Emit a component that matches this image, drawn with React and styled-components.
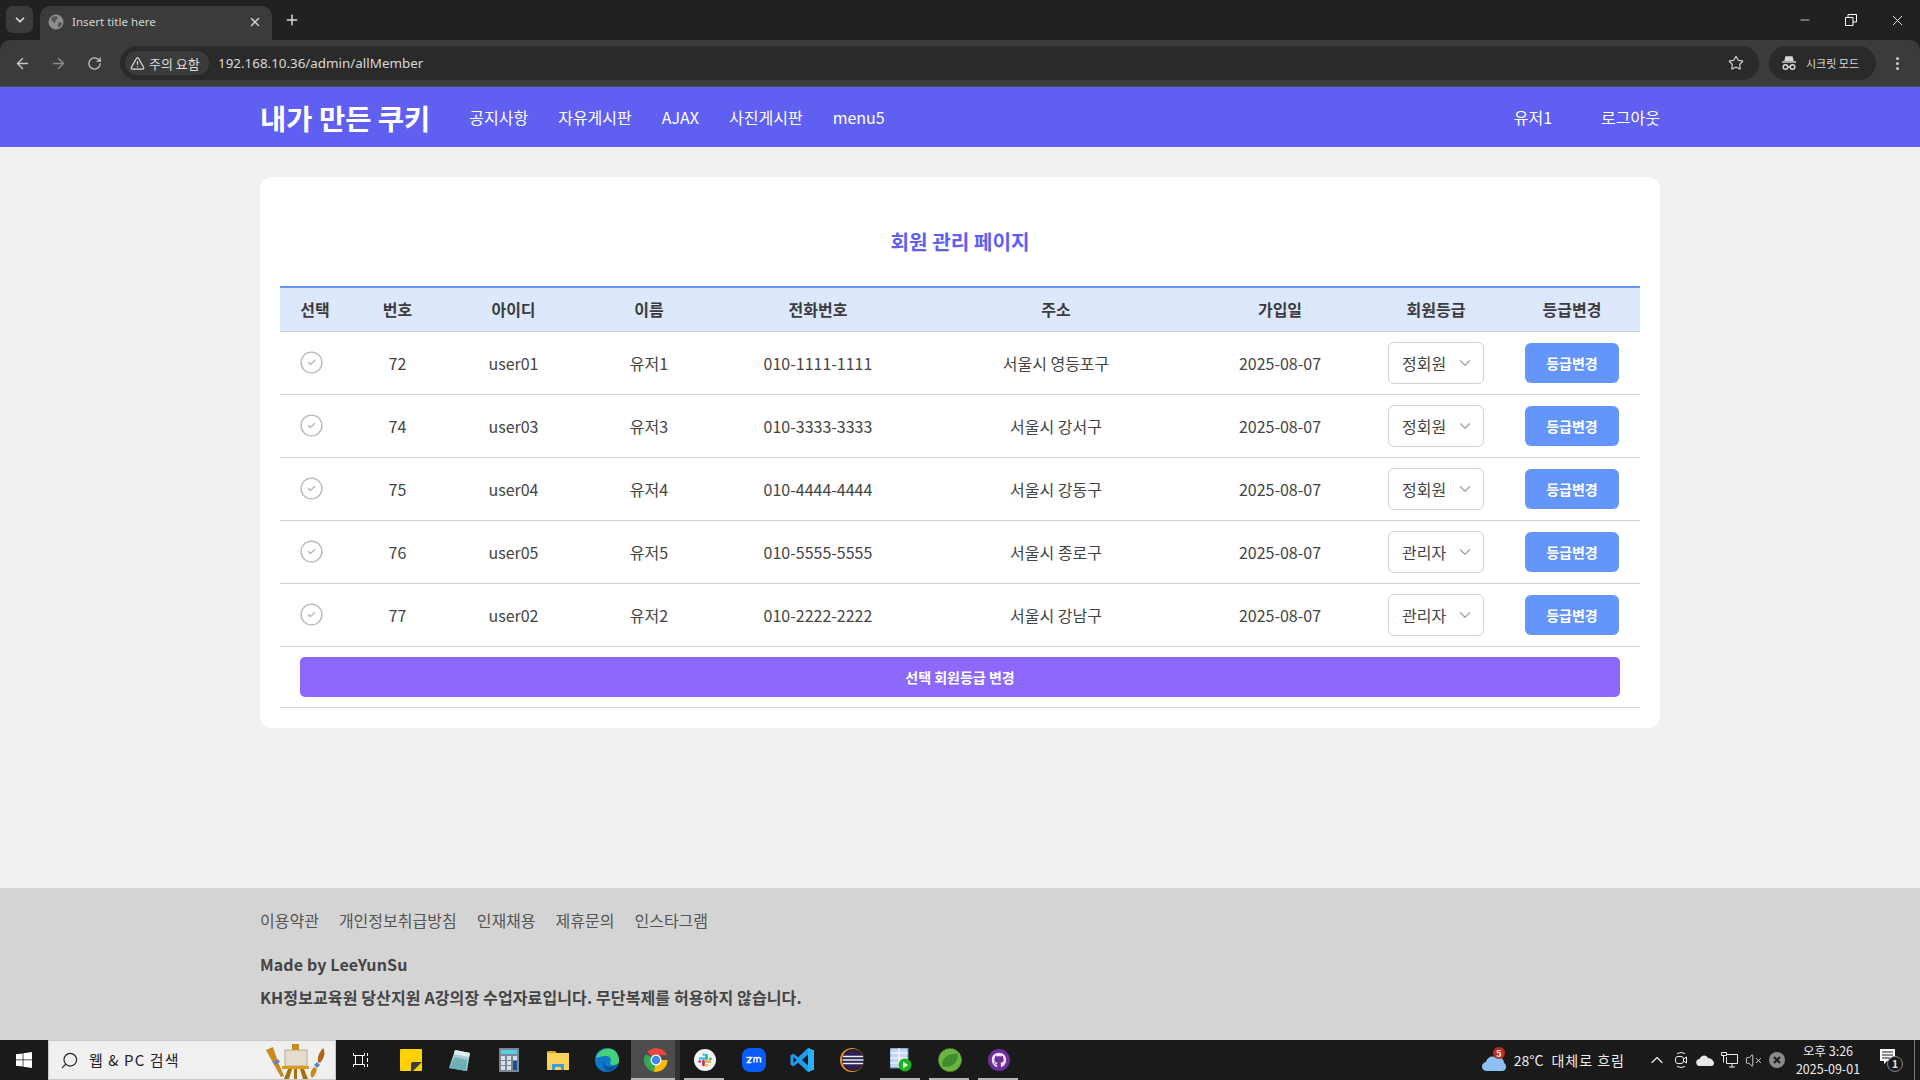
import React from "react";
import styled, { createGlobalStyle } from "styled-components";
import {
  ArrowLeft,
  ArrowRight,
  ChevronDown,
  ChevronUp,
  CircleCheck,
  EllipsisVertical,
  Minus,
  Plus,
  RotateCw,
  Search,
  Star,
  TriangleAlert,
  VolumeX,
  X,
} from "lucide-react";
import { FaGithub } from "react-icons/fa";

const members = [
  { no: 72, id: "user01", name: "유저1", phone: "010-1111-1111", addr: "서울시 영등포구", grade: "정회원" },
  { no: 74, id: "user03", name: "유저3", phone: "010-3333-3333", addr: "서울시 강서구", grade: "정회원" },
  { no: 75, id: "user04", name: "유저4", phone: "010-4444-4444", addr: "서울시 강동구", grade: "정회원" },
  { no: 76, id: "user05", name: "유저5", phone: "010-5555-5555", addr: "서울시 종로구", grade: "관리자" },
  { no: 77, id: "user02", name: "유저2", phone: "010-2222-2222", addr: "서울시 강남구", grade: "관리자" },
];

const columns = [
  ["선택", 70],
  ["번호", 95],
  ["아이디", 137],
  ["이름", 134],
  ["전화번호", 204],
  ["주소", 272],
  ["가입일", 176],
  ["회원등급", 136],
  ["등급변경", 136],
];

const GlobalStyle = createGlobalStyle`
  html, body {
    margin: 0;
    padding: 0;
    background: #f0f2f1;
  }
  body {
    font-family: "Noto Sans CJK KR", "Noto Sans", sans-serif;
    color: #444;
  }
  * {
    box-sizing: border-box;
  }
`;

const Page = styled.div`
  width: 1920px;
  height: 1080px;
  display: flex;
  flex-direction: column;
  overflow: hidden;
  background: #202221;
`;

/* browser window */
const TabStrip = styled.div`
  height: 40px;
  background: #202221;
  display: flex;
  align-items: flex-end;
  padding-left: 6px;
  color: #d8d8d8;
`;

const TabSearch = styled.div`
  width: 27px;
  height: 27px;
  margin: 0 7px 7px 0;
  background: #3b3b3b;
  border-radius: 7px;
  display: flex;
  align-items: center;
  justify-content: center;
  color: #ddd;
`;

const Tab = styled.div`
  width: 232px;
  height: 34px;
  padding: 0 10px 3px 8px;
  background: #3b3b3b;
  border-radius: 10px 10px 0 0;
  display: flex;
  align-items: center;
  font: 11.6px "Noto Sans", sans-serif;
  color: #d4d4d4;
`;

const TabTitle = styled.span`
  flex: 1;
  margin-left: 8px;
`;

const NewTab = styled.div`
  width: 20px;
  margin: 0 0 10px 10px;
  height: 20px;
  display: flex;
  align-items: center;
  justify-content: center;
  color: #ddd;
`;

const WindowControls = styled.div`
  margin-left: auto;
  display: flex;
  height: 40px;
  align-items: center;
  color: #fff;
`;

const WindowButton = styled.div`
  width: 46px;
  display: flex;
  justify-content: center;
`;

const Toolbar = styled.div`
  height: 47px;
  background: #3b3b3b;
  border-radius: 10px 10px 0 0;
  border-bottom: 1px solid #4a4a4a;
  display: flex;
  align-items: center;
  padding-left: 4px;
  color: #c7c7c7;
`;

const ToolButton = styled.div`
  width: 36px;
  display: flex;
  justify-content: center;
  color: ${(p) => (p.$dim ? "#8a8a8a" : "#c7c7c7")};
`;

const AddressBar = styled.div`
  width: 1639px;
  height: 34px;
  flex-shrink: 0;
  margin-left: 8px;
  background: #2a2a2a;
  border-radius: 17px;
  display: flex;
  align-items: center;
  padding: 0 15px 0 5px;
`;

const Chip = styled.div`
  width: 84px;
  height: 24px;
  background: #3b3b3b;
  border-radius: 12px;
  display: flex;
  align-items: center;
  gap: 4px;
  padding-left: 5px;
  font-size: 13px;
  color: #ddd;
`;

const Url = styled.span`
  margin-left: 9px;
  flex: 1;
  font: 13.4px "Noto Sans", sans-serif;
  color: #d8d8d8;
`;

const IncognitoPill = styled.div`
  width: 107px;
  height: 34px;
  flex-shrink: 0;
  margin-left: 10px;
  background: #2a2a2a;
  border-radius: 17px;
  display: flex;
  align-items: center;
  gap: 9px;
  padding-left: 12px;
  font-size: 11px;
  color: #d8d8d8;
`;

const MenuButton = styled.div`
  margin-left: 13px;
  display: flex;
`;

/* site header */
const Header = styled.header`
  height: 60px;
  background: #5f60f2;
  color: #fff;
`;

const Container = styled.div`
  width: 1400px;
  margin: 0 auto;
`;

const HeaderInner = styled(Container)`
  height: 100%;
  display: flex;
  align-items: center;
`;

const Logo = styled.a`
  font-size: 28.5px;
  font-weight: 700;
  margin-right: 39px;
`;

const NavLinks = styled.nav`
  display: flex;
  gap: 30px;
  font-size: 16px;
`;

const UserLinks = styled(NavLinks)`
  margin-left: auto;
  gap: 49px;
`;

const Main = styled.main`
  flex: 1;
  padding-top: 30px;
  background: #f0f2f1;
`;

const Card = styled(Container)`
  height: 551px;
  background: #fff;
  border-radius: 12px;
  padding: 0 20px;
`;

const Title = styled.h2`
  margin: 0;
  height: 109px;
  padding-top: 48px;
  line-height: 34px;
  text-align: center;
  font-size: 20.2px;
  font-weight: 700;
  color: #5f60f2;
`;

const Table = styled.table`
  width: 1360px;
  table-layout: fixed;
  border-collapse: collapse;
  font-size: 16px;
`;

const HeadRow = styled.tr`
  height: 44px;
  background: #dde8fd;
  border-top: 2px solid #6495fb;
  border-bottom: 1px solid #d2d2d2;
`;

const Th = styled.th`
  font-weight: 600;
  font-size: 16px;
  color: #3c3c3c;
  padding: 0;
`;

const Row = styled.tr`
  height: 63px;
  border-bottom: 1px solid #d2d2d2;
`;

const Td = styled.td`
  padding: 0;
  text-align: center;
  color: #444;
`;

const CheckCell = styled(Td)`
  padding-right: 7px;
  color: #b8b8b8;
  line-height: 0;
`;

const GradeSelect = styled.div`
  width: 96px;
  height: 42px;
  margin: 0 auto;
  border: 1px solid #d0d0d0;
  border-radius: 6px;
  display: flex;
  align-items: center;
  justify-content: space-between;
  padding: 0 9px 0 13px;
  color: #444;
  svg {
    color: #a8a8a8;
  }
`;

const GradeButton = styled.button`
  width: 94px;
  height: 40px;
  border: 0;
  border-radius: 6px;
  background: #6495fb;
  color: #fff;
  font: 700 14px "Noto Sans CJK KR", sans-serif;
`;

const ActionRow = styled.tr`
  height: 61px;
  border-bottom: 1px solid #d2d2d2;
`;

const ActionCell = styled.td`
  padding: 0 20px;
`;

const BulkButton = styled.button`
  display: block;
  width: 100%;
  height: 40px;
  border: 0;
  border-radius: 5px;
  background: #8c68fd;
  color: #fff;
  font: 700 14px "Noto Sans CJK KR", sans-serif;
`;

/* footer */
const Footer = styled.footer`
  height: 152px;
  background: #d4d4d4;
  color: #444;
`;

const FooterInner = styled(Container)`
  padding-top: 20px;
`;

const FooterLinks = styled.div`
  display: flex;
  gap: 20px;
  height: 24px;
  line-height: 24px;
  font-size: 16px;
  color: #555;
`;

const FooterLine = styled.p`
  margin: ${(p) => p.$top}px 0 0;
  height: 24px;
  line-height: 24px;
  font-size: 16px;
  font-weight: 600;
  letter-spacing: 0.12px;
`;

/* windows taskbar */
const Taskbar = styled.div`
  height: 40px;
  background: #1a1a1a;
  display: flex;
  align-items: center;
  color: #fff;
`;

const StartButton = styled.div`
  width: 48px;
  display: flex;
  justify-content: center;
`;

const SearchBox = styled.div`
  width: 288px;
  height: 40px;
  background: #f0f0f0;
  border: 1px solid #c9c9c9;
  display: flex;
  align-items: center;
  padding: 0 7px 0 11px;
  color: #222;
  font-size: 15px;
  letter-spacing: 1.1px;
  svg.lens {
    transform: scaleX(-1);
  }
`;

const SearchText = styled.span`
  margin-left: 10px;
  padding-bottom: 1px;
  flex: 1;
`;

const TaskViewSlot = styled.div`
  width: 50px;
  display: flex;
  justify-content: center;
`;

const AppSlot = styled.div`
  position: relative;
  width: 49px;
  height: 40px;
  display: flex;
  align-items: center;
  justify-content: center;
  background: ${(p) => (p.$active ? "linear-gradient(to right, #4d4d4d 44px, #333 44px)" : "transparent")};
  &::after {
    content: "";
    display: ${(p) => (p.$open ? "block" : "none")};
    position: absolute;
    bottom: 0;
    left: ${(p) => (p.$active ? 0 : 4)}px;
    width: ${(p) => (p.$active ? 44 : 40)}px;
    height: 2px;
    background: #b5b5b5;
  }
`;

const Tray = styled.div`
  margin-left: auto;
  display: flex;
  align-items: center;
  height: 40px;
  padding-right: 5px;
  font-size: 14px;
  color: #eee;
`;

const Weather = styled.div`
  display: flex;
  align-items: center;
  gap: 6px;
  margin-right: 20px;
`;

const WeatherLabel = styled.span`
  margin-left: 2px;
  letter-spacing: 1px;
`;

const TrayIcon = styled.div`
  width: 24px;
  display: flex;
  justify-content: center;
`;

const Clock = styled.div`
  width: 76px;
  margin-left: 1px;
  text-align: center;
  font-size: 12.5px;
  line-height: 18px;
  color: #eee;
  white-space: nowrap;
`;

const Notice = styled.div`
  margin: 0 9px 0 13px;
  display: flex;
`;

const Edge = styled.div`
  width: 1px;
  height: 40px;
  background: #777;
`;

const GlobeIcon = () => (
  <svg width="16" height="16" viewBox="0 0 16 16">
    <circle cx="8" cy="8" r="7.500" fill="#8e8e8e" />
    <path d="M4 3l4-1 2 2-2 2-1 3-2-1-2-3zM10 9l3-1 1 2-3 4-1-2z" fill="#555" />
  </svg>
);

const RestoreIcon = () => (
  <svg width="12" height="12" viewBox="0 0 12 12" fill="none" stroke="#fff">
    <path d="M.5 3.500h7.500v8H.5zM3 3V.5h8.500V8H8" />
  </svg>
);

const IncognitoIcon = () => (
  <svg width="16" height="16" viewBox="0 0 16 16" fill="none" stroke="#d8d8d8" strokeWidth="1.400">
    <path d="M4 6l1-4h6l1 4" fill="#d8d8d8" />
    <path d="M1 7h14" />
    <circle cx="4.500" cy="12" r="2.300" />
    <circle cx="11.500" cy="12" r="2.300" />
    <path d="M6.800 12h2.400" />
  </svg>
);

const WindowsLogo = () => (
  <svg width="16" height="16" viewBox="0 0 16 16" fill="#fff">
    <path d="M0 2.300l6.700-.9v6.200H0zM7.400 1.300L16 0v7.600H7.400zM0 8.300h6.700v6.300L0 13.700zM7.400 8.300H16V16l-8.600-1.200z" />
  </svg>
);

const Doodle = () => (
  <svg width="64" height="38" viewBox="0 0 64 38">
    <path d="M2 9l7-3 5 15 6 14-3 1-8-14z" fill="#c98a1e" />
    <path d="M9 21l5-3 2 3-5 3z" fill="#6b7fc4" />
    <rect x="21" y="9" width="22" height="16" fill="#e5ddd0" stroke="#b9a98a" />
    <rect x="28" y="3" width="7" height="6" fill="#c98a1e" />
    <path d="M18 25h27v3H18z" fill="#d99a1e" />
    <path d="M24 28h4l-3 10h-5zM30 28h3v10h-3zM36 28h4l4 10h-5z" fill="#a86f10" />
    <path d="M48 37c-3-4-1-8 2-11l3 2c-1 4-2 7-5 9z" fill="#c98a1e" />
    <path d="M50 24l3-3 3 3-3 3z" fill="#6b7fc4" />
    <path d="M54 21c-1-6 2-10 5-14 3 4 1 11-3 15z" fill="#b0641c" />
  </svg>
);

const TaskViewIcon = () => (
  <svg width="16" height="16" viewBox="0 0 16 16" fill="none" stroke="#fff">
    <path d="M.5 1v2.500h11V1M.5 15v-2.500h11V15M2.500 4v8M9.500 4v8M14.500 1v3M14.500 6v4M14.500 12v3" />
  </svg>
);

const StickyIcon = () => (
  <svg width="22" height="22" viewBox="0 0 22 22">
    <rect width="22" height="22" rx="1" fill="#ffd200" />
    <path d="M11 22V15q0-2 2-2h9L13 22z" fill="#3a3a3a" />
  </svg>
);

const NotesIcon = () => (
  <svg width="24" height="24" viewBox="0 0 24 24">
    <path d="M7 2l15 3-3 18-18-3z" fill="#a9cdd2" />
    <path d="M7 2l15 3-1 4-15-3z" fill="#dfeef0" />
    <path d="M1 20l6-11 12 3-1 11z" fill="#6fb0b8" />
  </svg>
);

const CalcIcon = () => (
  <svg width="20" height="24" viewBox="0 0 20 24">
    <rect width="20" height="24" fill="#7a8894" />
    <rect x="2" y="2" width="16" height="4" fill="#56d1e6" />
    {[8, 13, 18].map((y) =>
      [2, 8].map((x) => <rect key={`${x}-${y}`} x={x} y={y} width="4" height="4" fill="#d9e1e8" />)
    )}
    <rect x="14" y="8" width="4" height="4" fill="#d9e1e8" />
    <rect x="14" y="13" width="4" height="9" fill="#1f4f99" />
  </svg>
);

const FolderIcon = () => (
  <svg width="22" height="20" viewBox="0 0 22 20">
    <path d="M0 1h8l2 2h-10z" fill="#d9a227" />
    <rect y="3" width="22" height="17" fill="#fbd35a" />
    <path d="M5 20v-6h12v6h-3v-3H8v3z" fill="#3f9ae0" />
  </svg>
);

const EdgeIcon = () => (
  <svg width="24" height="24" viewBox="0 0 24 24">
    <circle cx="12" cy="12" r="12" fill="#0c78c9" />
    <path d="M1 10C3 2 11-1 17 1c5 2 7 7 7 12 0 3-3 4-6 4-2 0-3-1-3-2 2-3 0-7-4-7-4 0-8 1-10 2z" fill="#45d07c" />
    <path d="M10 10c-3 3-1 9 5 9 3 0 5-1 7-3-2 5-6 8-11 8 3-1 1-1-1-3-2-3-3-8 0-11z" fill="#10509c" />
  </svg>
);

const ChromeIcon = () => (
  <svg width="24" height="24" viewBox="0 0 24 24">
    <path d="M12 12L3.200 3.900A12 12 0 0 1 23 7.200H12z" fill="#e8453c" />
    <path d="M12 12L1.600 6A12 12 0 0 0 10 23.800L16 14z" fill="#34a853" />
    <path d="M12 12h11.500A12 12 0 0 1 10 23.800z" fill="#fbbc05" />
    <circle cx="12" cy="12" r="5.500" fill="#fff" />
    <circle cx="12" cy="12" r="4.300" fill="#4285f4" />
  </svg>
);

const SlackIcon = () => (
  <svg width="22" height="22" viewBox="0 0 22 22" strokeWidth="2.600" strokeLinecap="round">
    <circle cx="11" cy="11" r="11" fill="#f4f4f4" />
    <path d="M6 9.500h4M9.800 5.500v.2" stroke="#36c5f0" />
    <path d="M12.500 6v4M16.500 9.800h-.2" stroke="#2eb67d" />
    <path d="M12 12.500h4M12.500 16.500v-.2" stroke="#ecb22e" />
    <path d="M9.500 12v4M5.500 12.500h.2" stroke="#e01e5a" />
  </svg>
);

const ZoomIcon = () => (
  <svg width="24" height="24" viewBox="0 0 24 24">
    <rect width="24" height="24" rx="8" fill="#0b5cff" />
    <path d="M4.500 9.500h5l-4 5h4M12 14.500v-5M12 10.500c0-1.400 3-1.400 3 0v4M15 10.500c0-1.400 3.500-1.400 3.500 0v4" fill="none" stroke="#fff" strokeWidth="1.500" />
  </svg>
);

const VsCodeIcon = () => (
  <svg width="25" height="24" viewBox="0 0 24 24">
    <path d="M17.500 0L7.700 9.300 3 5.700 0 7.300v9.400l3 1.600 4.700-3.600 9.800 9.300 6-2.500V2.500zM3 15V9l3 3zm14.500 2.500L11.500 12l6-5.500z" fill="#1f9cf0" />
    <path d="M17.500 0l6 2.500v19l-6 2.500z" fill="#2bb0f5" />
  </svg>
);

const EclipseIcon = () => (
  <svg width="24" height="24" viewBox="0 0 24 24">
    <circle cx="12" cy="12" r="12" fill="#e8912d" />
    <circle cx="13" cy="12" r="11" fill="#1a1a1a" />
    <circle cx="13" cy="12" r="10" fill="#2c2255" />
    <path d="M3 8.500h20M2.500 12h21M3 15.500h20" stroke="#f0f0f0" strokeWidth="1.600" />
  </svg>
);

const TableAppIcon = () => (
  <svg width="22" height="24" viewBox="0 0 22 24">
    <rect width="18" height="20" fill="#c4d6f2" stroke="#5b80bd" />
    <path d="M0 5h18M0 10h18M0 15h18M9 0v20" stroke="#fff" />
    <circle cx="15" cy="17" r="6.500" fill="#18b818" />
    <path d="M13 13.500l5 3.500-5 3.500z" fill="#fff" />
  </svg>
);

const SpringIcon = () => (
  <svg width="24" height="24" viewBox="0 0 24 24">
    <circle cx="12" cy="12" r="11.500" fill="#6db33f" stroke="#4c8a2a" strokeDasharray="2 1.500" />
    <path d="M4 18C4 9 11 5 20 6c0 8-5 13-12 13-1 0-3 0-4-1zM7 17c3-4 6-6 9-8" fill="#3f8f2f" />
  </svg>
);

const GithubIcon = () => (
  <svg width="22" height="22" viewBox="0 0 22 22">
    <circle cx="11" cy="11" r="11" fill="#6d2f9c" />
    <FaGithub x="3.500" y="3.500" size="15" color="#f0e6f7" />
  </svg>
);

const WeatherIcon = () => (
  <svg width="26" height="26" viewBox="0 0 26 26">
    <path d="M5 24a4.500 4.500 0 0 1-1-9c1-5 7-7 10-4 4-2 8 1 8 5 3 1 3 8-2 8z" fill="#8cc0f2" />
    <circle cx="17" cy="6" r="6" fill="#c42b1c" />
    <text x="17" y="9.500" fontSize="9" fontWeight="700" fill="#fff" textAnchor="middle">5</text>
  </svg>
);

const MeetIcon = () => (
  <svg width="14" height="18" viewBox="0 0 14 18" fill="none" stroke="#eee">
    <path d="M3 2.500q4-2 8 0M3 15.500q4 2 8 0" />
    <rect x="1.500" y="5.500" width="8" height="7" rx="2.500" />
    <path d="M9.500 8l3-2v6l-3-2" />
  </svg>
);

const CloudIcon = () => (
  <svg width="18" height="12" viewBox="0 0 18 12" fill="#e8e8e8">
    <path d="M4 12a3.500 3.500 0 0 1-.5-7C5 1 10 0 12 4c3 0 6 3 6 5 0 2-1 3-3 3z" />
  </svg>
);

const NetworkIcon = () => (
  <svg width="17" height="16" viewBox="0 0 17 16" fill="none" stroke="#eee">
    <path d="M.5.500h5v3h-5zM5.500 2.500h11v9h-11V5M2.500 3.500v7M8 15h6M11 11.500V15" />
  </svg>
);

const StopIcon = () => (
  <svg width="16" height="16" viewBox="0 0 16 16">
    <circle cx="8" cy="8" r="8" fill="#8a8a8a" />
    <path d="M5 5l6 6M11 5l-6 6" stroke="#1a1a1a" strokeWidth="2" />
  </svg>
);

const NoticeIcon = () => (
  <svg width="26" height="26" viewBox="0 0 26 26">
    <path d="M1 2h15v12H8l-3 3v-3H1z" fill="#fff" />
    <path d="M3 5h11M3 8h11M3 11h8" stroke="#1a1a1a" />
    <circle cx="16" cy="17" r="7.500" fill="#1a1a1a" stroke="#888" />
    <text x="16" y="21" fontSize="11" fontWeight="700" fill="#ddd" textAnchor="middle">1</text>
  </svg>
);

const apps = [
  { icon: <StickyIcon /> },
  { icon: <NotesIcon /> },
  { icon: <CalcIcon /> },
  { icon: <FolderIcon /> },
  { icon: <EdgeIcon /> },
  { icon: <ChromeIcon />, active: true, open: true },
  { icon: <SlackIcon />, open: true },
  { icon: <ZoomIcon /> },
  { icon: <VsCodeIcon /> },
  { icon: <EclipseIcon /> },
  { icon: <TableAppIcon />, open: true },
  { icon: <SpringIcon />, open: true },
  { icon: <GithubIcon />, open: true },
];

function BrowserChrome() {
  return (
    <>
      <TabStrip>
        <TabSearch>
          <ChevronDown size={14} strokeWidth={3} />
        </TabSearch>
        <Tab>
          <GlobeIcon />
          <TabTitle>Insert title here</TabTitle>
          <X size={14} strokeWidth={2.5} />
        </Tab>
        <NewTab>
          <Plus size={16} strokeWidth={2.2} />
        </NewTab>
        <WindowControls>
          <WindowButton>
            <Minus size={14} strokeWidth={1.2} />
          </WindowButton>
          <WindowButton>
            <RestoreIcon />
          </WindowButton>
          <WindowButton>
            <X size={17} strokeWidth={1.2} />
          </WindowButton>
        </WindowControls>
      </TabStrip>
      <Toolbar>
        <ToolButton>
          <ArrowLeft size={17} />
        </ToolButton>
        <ToolButton $dim>
          <ArrowRight size={17} />
        </ToolButton>
        <ToolButton>
          <RotateCw size={15} />
        </ToolButton>
        <AddressBar>
          <Chip>
            <TriangleAlert size={15} />
            주의 요함
          </Chip>
          <Url>192.168.10.36/admin/allMember</Url>
          <Star size={16} strokeWidth={1.8} />
        </AddressBar>
        <IncognitoPill>
          <IncognitoIcon />
          시크릿 모드
        </IncognitoPill>
        <MenuButton>
          <EllipsisVertical size={17} strokeWidth={2.4} />
        </MenuButton>
      </Toolbar>
    </>
  );
}

function SiteHeader() {
  return (
    <Header>
      <HeaderInner>
        <Logo>내가 만든 쿠키</Logo>
        <NavLinks>
          <span>공지사항</span>
          <span>자유게시판</span>
          <span>AJAX</span>
          <span>사진게시판</span>
          <span>menu5</span>
        </NavLinks>
        <UserLinks>
          <span>유저1</span>
          <span>로그아웃</span>
        </UserLinks>
      </HeaderInner>
    </Header>
  );
}

function MemberTable() {
  return (
    <Table>
      <colgroup>
        {columns.map(([label, width]) => (
          <col key={label} width={width} />
        ))}
      </colgroup>
      <thead>
        <HeadRow>
          {columns.map(([label]) => (
            <Th key={label}>{label}</Th>
          ))}
        </HeadRow>
      </thead>
      <tbody>
        {members.map((m) => (
          <Row key={m.no}>
            <CheckCell>
              <CircleCheck size={25} strokeWidth={1.3} />
            </CheckCell>
            <Td>{m.no}</Td>
            <Td>{m.id}</Td>
            <Td>{m.name}</Td>
            <Td>{m.phone}</Td>
            <Td>{m.addr}</Td>
            <Td>2025-08-07</Td>
            <Td>
              <GradeSelect>
                {m.grade}
                <ChevronDown size={18} strokeWidth={1.9} />
              </GradeSelect>
            </Td>
            <Td>
              <GradeButton>등급변경</GradeButton>
            </Td>
          </Row>
        ))}
        <ActionRow>
          <ActionCell colSpan={9}>
            <BulkButton>선택 회원등급 변경</BulkButton>
          </ActionCell>
        </ActionRow>
      </tbody>
    </Table>
  );
}

function SiteFooter() {
  return (
    <Footer>
      <FooterInner>
        <FooterLinks>
          <span>이용약관</span>
          <span>개인정보취급방침</span>
          <span>인재채용</span>
          <span>제휴문의</span>
          <span>인스타그램</span>
        </FooterLinks>
        <FooterLine $top={20}>Made by LeeYunSu</FooterLine>
        <FooterLine $top={9}>KH정보교육원 당산지원 A강의장 수업자료입니다. 무단복제를 허용하지 않습니다.</FooterLine>
      </FooterInner>
    </Footer>
  );
}

function WindowsTaskbar() {
  return (
    <Taskbar>
      <StartButton>
        <WindowsLogo />
      </StartButton>
      <SearchBox>
        <Search className="lens" size={19} strokeWidth={1.5} />
        <SearchText>웹 &amp; PC 검색</SearchText>
        <Doodle />
      </SearchBox>
      <TaskViewSlot>
        <TaskViewIcon />
      </TaskViewSlot>
      {apps.map((app, i) => (
        <AppSlot key={i} $active={app.active} $open={app.open}>
          {app.icon}
        </AppSlot>
      ))}
      <Tray>
        <Weather>
          <WeatherIcon />
          <span>28°C</span>
          <WeatherLabel>대체로 흐림</WeatherLabel>
        </Weather>
        <TrayIcon>
          <ChevronUp size={20} strokeWidth={1.4} />
        </TrayIcon>
        <TrayIcon>
          <MeetIcon />
        </TrayIcon>
        <TrayIcon>
          <CloudIcon />
        </TrayIcon>
        <TrayIcon>
          <NetworkIcon />
        </TrayIcon>
        <TrayIcon>
          <VolumeX size={17} strokeWidth={1.2} />
        </TrayIcon>
        <TrayIcon>
          <StopIcon />
        </TrayIcon>
        <Clock>
          오후 3:26
          <br />
          2025-09-01
        </Clock>
        <Notice>
          <NoticeIcon />
        </Notice>
        <Edge />
      </Tray>
    </Taskbar>
  );
}

export default function App() {
  return (
    <Page>
      <GlobalStyle />
      <BrowserChrome />
      <SiteHeader />
      <Main>
        <Card>
          <Title>회원 관리 페이지</Title>
          <MemberTable />
        </Card>
      </Main>
      <SiteFooter />
      <WindowsTaskbar />
    </Page>
  );
}
